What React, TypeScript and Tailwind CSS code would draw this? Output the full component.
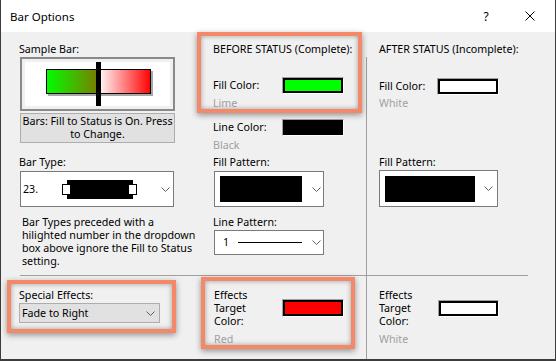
import React from "react";

function Chevron() {
  return (
    <svg width="9" height="5" viewBox="0 0 9 5" className="shrink-0">
      <polyline points="0.5,0.5 4.5,4.5 8.5,0.5" fill="none" stroke="#5f5f5f" strokeWidth="1" />
    </svg>
  );
}

function Swatch({ size, fill }: { size: string; fill: string }) {
  return (
    <div className={"shrink-0 border border-t-[#a0a0a0] border-l-[#a0a0a0] border-r-white border-b-white " + size}>
      <div className={"w-full h-full border-2 border-black " + fill} />
    </div>
  );
}

function Gray({ children, cls }: { children: React.ReactNode; cls: string }) {
  return <div className={"text-[#a0a0a0] " + cls}>{children}</div>;
}

export default function App() {
  return (
    <div className="relative w-[556px] h-[361px] bg-[#f0f0f0] border-x border-b-2 border-[#3c3c3c] flex flex-col overflow-hidden font-['Noto_Sans',sans-serif] text-[10.7px] leading-[13px] text-black">
      {/* Title bar */}
      <div className="h-[32px] shrink-0 bg-white flex items-center">
        <span className="ml-[9px] text-[11.5px]">Bar Options</span>
        <span className="ml-auto w-[10px] text-center text-[12px]">?</span>
        <svg width="10" height="10" viewBox="0 0 10 10" className="ml-[34px] mr-[20px]">
          <line x1="0.5" y1="0.5" x2="9.5" y2="9.5" stroke="#000" strokeWidth="1" />
          <line x1="9.5" y1="0.5" x2="0.5" y2="9.5" stroke="#000" strokeWidth="1" />
        </svg>
      </div>

      {/* Top section */}
      <div className="h-[243px] shrink-0 flex">
        {/* Left column */}
        <div className="w-[199px] shrink-0 flex flex-col pl-[18px] pt-[11px]">
          <div>Sample Bar:</div>
          <div className="mt-[1px] ml-[1px] w-[155px] h-[54px] border-2 border-[#8a8a8a] p-[3px] bg-[#f0f0f0]">
            <div className="w-full h-full bg-white">
              <svg width="145" height="44" viewBox="0 0 145 44">
                <defs>
                  <linearGradient id="gl" x1="0" x2="1" y1="0" y2="0">
                    <stop offset="0" stopColor="#00ff00" />
                    <stop offset="1" stopColor="#7a7d00" />
                  </linearGradient>
                  <linearGradient id="gr" x1="0" x2="1" y1="0" y2="0">
                    <stop offset="0" stopColor="#ffffff" />
                    <stop offset="1" stopColor="#ff0000" />
                  </linearGradient>
                </defs>
                <rect x="23" y="9" width="105" height="25" fill="#a8a8a8" />
                <rect x="21" y="7" width="52" height="25" fill="url(#gl)" />
                <rect x="73" y="7" width="53" height="25" fill="url(#gr)" />
                <rect x="21.5" y="7.5" width="104" height="24" fill="none" stroke="#000" strokeWidth="1" />
                <rect x="71" y="0" width="5" height="44" fill="#000" />
              </svg>
            </div>
          </div>
          <div className="mt-[2px] ml-[1px] w-[155px] h-[30px] border border-[#adadad] bg-[#e1e1e1] flex flex-col items-center justify-center text-center">
            <span>Bars: Fill to Status is On. Press</span>
            <span>to Change.</span>
          </div>
          <div className="mt-[13px]">Bar Type:</div>
          <div className="mt-[2px] ml-[1px] w-[154px] h-[36px] border border-[#7a7a7a] bg-white flex items-center pl-[2px]">
            <span className="w-[39px] shrink-0">23.</span>
            <svg width="76" height="19" viewBox="0 0 76 19" className="shrink-0">
              <rect x="5" y="0" width="66" height="19" fill="#000" />
              <rect x="0.5" y="4.5" width="8" height="10" fill="#fff" stroke="#000" strokeWidth="1" />
              <rect x="66.5" y="4.5" width="8" height="10" fill="#fff" stroke="#000" strokeWidth="1" />
            </svg>
            <span className="ml-[23px] flex">
              <Chevron />
            </span>
          </div>
          <div className="mt-[9px] ml-[3px] whitespace-nowrap">
            Bar Types preceded with a
            <br />
            hilighted number in the dropdown
            <br />
            box above ignore the Fill to Status
            <br />
            setting.
          </div>
        </div>

        {/* Middle column */}
        <div className="w-[166px] shrink-0 flex flex-col pl-[13px] pt-[11px]">
          <div className="whitespace-nowrap">BEFORE STATUS (Complete):</div>
          <div className="mt-[21px] flex items-center">
            <span className="w-[69px] shrink-0">Fill Color:</span>
            <Swatch size="w-[62px] h-[17px]" fill="bg-[#00ff00]" />
          </div>
          <Gray cls="mt-[3px]">Lime</Gray>
          <div className="mt-[9px] flex items-center">
            <span className="w-[69px] shrink-0">Line Color:</span>
            <Swatch size="w-[62px] h-[17px]" fill="bg-black" />
          </div>
          <Gray cls="mt-[3px]">Black</Gray>
          <div className="mt-[4px]">Fill Pattern:</div>
          <div className="mt-[2px] ml-[1px] w-[110px] h-[36px] border border-[#7a7a7a] bg-white flex items-center pl-[5px]">
            <div className="w-[82px] h-[26px] bg-black shrink-0" />
            <span className="ml-[10px] flex">
              <Chevron />
            </span>
          </div>
          <div className="mt-[9px]">Line Pattern:</div>
          <div className="mt-[1px] ml-[1px] w-[110px] h-[25px] border border-[#7a7a7a] bg-white flex items-center pl-[8px]">
            <span className="w-[15px] shrink-0">1</span>
            <div className="w-[64px] h-px bg-black shrink-0" />
            <span className="ml-[10px] flex">
              <Chevron />
            </span>
          </div>
        </div>

        {/* Right column */}
        <div className="flex-1 flex">
          <div className="w-px bg-[#a0a0a0] mt-[25px]" />
          <div className="flex-1 flex flex-col pl-[12px] pt-[11px]">
            <div className="whitespace-nowrap">AFTER STATUS (Incomplete):</div>
            <div className="mt-[22px] flex items-center">
              <span className="w-[58px] shrink-0">Fill Color:</span>
              <Swatch size="w-[62px] h-[17px]" fill="bg-white" />
            </div>
            <Gray cls="mt-[2px]">White</Gray>
            <div className="mt-[46px]">Fill Pattern:</div>
            <div className="mt-[1px] w-[119px] h-[37px] border border-[#7a7a7a] bg-white flex items-center pl-[5px]">
              <div className="w-[90px] h-[26px] bg-black shrink-0" />
              <span className="ml-[9px] flex">
                <Chevron />
              </span>
            </div>
          </div>
        </div>
      </div>

      {/* Separator */}
      <div className="h-px w-[508px] ml-[19px] bg-[#a0a0a0] shrink-0" />

      {/* Bottom section */}
      <div className="flex-1 flex">
        <div className="w-[199px] shrink-0 flex flex-col pl-[18px] pt-[13px]">
          <div>Special Effects:</div>
          <div className="mt-[1px] w-[141px] h-[20px] border border-[#adadad] bg-[#e1e1e1] flex items-center pl-[2px] pr-[4px]">
            <span>Fade to Right</span>
            <span className="ml-auto flex">
              <Chevron />
            </span>
          </div>
        </div>
        <div className="w-[166px] shrink-0 flex flex-col pl-[14px] pt-[13px]">
          <div className="flex items-start">
            <div className="w-[68px] shrink-0">
              Effects
              <br />
              Target
              <br />
              Color:
            </div>
            <div className="mt-[10px]">
              <Swatch size="w-[62px] h-[18px]" fill="bg-[#ff0000]" />
            </div>
          </div>
          <Gray cls="mt-[5px]">Red</Gray>
        </div>
        <div className="flex-1 flex">
          <div className="w-px bg-[#a0a0a0]" />
          <div className="flex-1 flex flex-col pl-[12px] pt-[13px]">
            <div className="flex items-start">
              <div className="w-[59px] shrink-0">
                Effects
                <br />
                Target
                <br />
                Color:
              </div>
              <div className="mt-[11px]">
                <Swatch size="w-[61px] h-[17px]" fill="bg-white" />
              </div>
            </div>
            <Gray cls="mt-[5px]">White</Gray>
          </div>
        </div>
      </div>

      {/* Orange annotation highlights */}
      <div className="absolute left-[196px] top-[32px] w-[165px] h-[81px] border-4 border-[#f4896a] shadow-[0_2px_6px_rgba(0,0,0,0.4),inset_0_0_5px_rgba(0,0,0,0.35)] pointer-events-none" />
      <div className="absolute left-[6px] top-[280px] w-[169px] h-[53px] border-4 border-[#f4896a] shadow-[0_2px_6px_rgba(0,0,0,0.4),inset_0_0_5px_rgba(0,0,0,0.35)] pointer-events-none" />
      <div className="absolute left-[200px] top-[277px] w-[154px] h-[72px] border-4 border-[#f4896a] shadow-[0_2px_6px_rgba(0,0,0,0.4),inset_0_0_5px_rgba(0,0,0,0.35)] pointer-events-none" />
    </div>
  );
}
